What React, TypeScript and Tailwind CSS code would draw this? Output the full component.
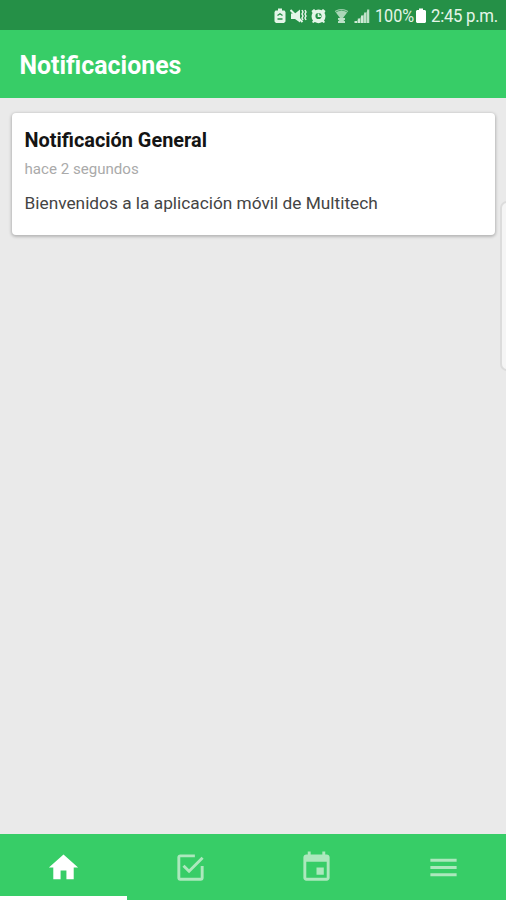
import { useState } from 'react'

const TABS = [
  { id: 'home', label: 'Inicio', path: 'M10 20v-6h4v6h5v-8h3L12 3 2 12h3v8z' },
  {
    id: 'tasks',
    label: 'Tareas',
    path: 'M19 19H5V5h10V3H5c-1.11 0-2 .89-2 2v14a2 2 0 0 0 2 2h14a2 2 0 0 0 2-2v-8h-2M7.91 10.08 6.5 11.5 11 16 21 6l-1.41-1.42L11 13.17z',
  },
  {
    id: 'events',
    label: 'Eventos',
    path: 'M17 12h-5v5h5v-5zM16 1v2H8V1H6v2H5c-1.11 0-1.99.9-1.99 2L3 19c0 1.1.89 2 2 2h14c1.1 0 2-.9 2-2V5c0-1.1-.9-2-2-2h-1V1h-2zm3 18H5V8h14v11z',
  },
  { id: 'menu', label: 'Menú', path: 'M3 18h18v-2H3v2zm0-5h18v-2H3v2zm0-7v2h18V6H3z' },
]

const NOTIFICATIONS = [
  {
    title: 'Notificación General',
    time: 'hace 2 segundos',
    body: 'Bienvenidos a la aplicación móvil de Multitech',
  },
]

function StatusBar() {
  return (
    <div className="flex h-[30px] shrink-0 items-center justify-end bg-[#259047] pt-px pr-[8px] text-[#e4f5e8]">
      {/* battery saver */}
      <svg className="mr-[4px] h-4 w-3" viewBox="0 0 12 16" fill="currentColor">
        <path d="M4 .5h4v2h2.500l1 1.500v9.500l-1.500 1.500H2L.5 13.500V4L1.500 2.500H4z" />
        <path d="M3.500 7.500 6 5.800l2.500 1.700M3.500 11h5" fill="none" stroke="#259047" strokeWidth="1.300" />
      </svg>
      {/* muted, vibrate */}
      <svg className="mr-[4px] h-4 w-[17px]" viewBox="0 0 17 16" fill="currentColor">
        <path d="M1 5.500h4l5-4v13L5 11H1z" />
        <path d="m.5 2 12 12" fill="none" stroke="currentColor" strokeWidth="2" />
        <path d="m12 2 1 2-1 2 1 2-1 2 1 2M15 2l1 2-1 2 1 2-1 2 1 2" fill="none" stroke="currentColor" strokeWidth="1.500" />
      </svg>
      {/* alarm */}
      <svg className="mr-[8px] h-4 w-[15px]" viewBox="0 0 15 16" fill="currentColor">
        <path d="M.5 3 3 1l1.500 1.200a7 7 0 0 1 6 0L12 1l2.500 2-1 2a7 7 0 0 1-.5 7.500l1 1.500-1.300 1-1.500-1a7 7 0 0 1-7.400 0l-1.500 1L1 14l1-1.500A7 7 0 0 1 1.500 5z" />
        <circle cx="7.500" cy="8" r="3.100" fill="#259047" />
        <path d="M7.500 5.500v2.700H10" fill="none" stroke="currentColor" strokeWidth="1.600" />
      </svg>
      {/* wifi */}
      <svg className="mr-[5px] h-4 w-[15px]" viewBox="0 0 15 16" fill="currentColor">
        <path d="M.8 3Q7.500-1 14.200 3L9 10H6z" opacity=".7" />
        <path d="M1.800 4Q7.500.5 13.200 4" fill="none" stroke="#259047" strokeWidth=".700" />
        <path d="M4 10h7v1.800l-1.500.7 1.500.8V15H4v-1.700l1.500-.8-1.500-.7z" opacity=".8" />
      </svg>
      {/* signal */}
      <svg className="mr-[5px] h-4 w-[16px]" viewBox="0 0 16 16" fill="currentColor">
        <path d="M.5 13H3v2H.5zM3.800 10.500h2.400V15H3.800zM7 7.500h2.400V15H7z" opacity=".85" />
        <path d="M10 4.500h2.300V15H10zM13 1.500h2.300V15H13z" opacity=".7" />
        <path d="M.5 15 15 1.500V15z" opacity=".35" />
      </svg>
      <span className="w-[38px] origin-left scale-x-[0.9] pt-px text-[18px] leading-none whitespace-nowrap">100%</span>
      {/* battery */}
      <svg className="mr-[5px] ml-[3px] h-4 w-[10px]" viewBox="0 0 10 16" fill="#fff">
        <path d="M3 .5h4v1.500h2l1 1v11l-1 1H1l-1-1V3l1-1h2z" />
      </svg>
      <span className="w-[67px] origin-left scale-x-[0.93] pt-px text-[18px] leading-none tracking-[-0.300px] whitespace-nowrap">2:45 p.m.</span>
    </div>
  )
}

function NotificationCard({ item }: { item: (typeof NOTIFICATIONS)[number] }) {
  return (
    <article className="h-[122px] rounded-[4px] bg-white px-[12.500px] pt-4 shadow-[0_1px_3px_1px_rgba(0,0,0,0.22)]">
      <h2 className="text-[19.900px] leading-6 font-bold whitespace-nowrap text-[#141414]">{item.title}</h2>
      <p className="mt-[6px] text-[15.100px] leading-5 whitespace-nowrap text-[#aaa]">{item.time}</p>
      <p className="mt-3 text-[17.300px] leading-6 whitespace-nowrap text-[#444]">{item.body}</p>
    </article>
  )
}

export default function App() {
  const [active, setActive] = useState('home')

  return (
    <div className="relative flex h-[900px] w-[506px] flex-col overflow-hidden bg-[#eaeaea] font-['Roboto',sans-serif]">
      <StatusBar />
      <header className="flex h-[68px] shrink-0 items-center bg-[#37cd67] pt-[3px] pl-[19.500px] text-white">
        <h1 className="text-[24.900px] leading-8 font-bold">Notificaciones</h1>
      </header>

      <main className="flex-1 pt-[15px] pr-[11px] pl-3">
        {NOTIFICATIONS.map((item) => (
          <NotificationCard key={item.title} item={item} />
        ))}
      </main>

      {/* edge panel handle */}
      <div className="absolute top-[201px] -right-2 h-[170px] w-[14px] rounded-[8px] border-2 border-[#dcdcdc] bg-[#f5f5f5]" />

      <nav className="flex h-[66px] shrink-0 bg-[#37cd67]">
        {TABS.map((tab) => (
          <button
            key={tab.id}
            type="button"
            aria-label={tab.label}
            onClick={() => setActive(tab.id)}
            className={`flex flex-1 items-center justify-center border-b-4 pt-[5px] pl-px ${
              active === tab.id ? 'border-white text-white' : 'border-transparent text-[#ace8bd]'
            }`}
          >
            <svg className="h-[35px] w-[35px]" viewBox="0 0 24 24" fill="currentColor">
              <path d={tab.path} />
            </svg>
          </button>
        ))}
      </nav>
    </div>
  )
}
